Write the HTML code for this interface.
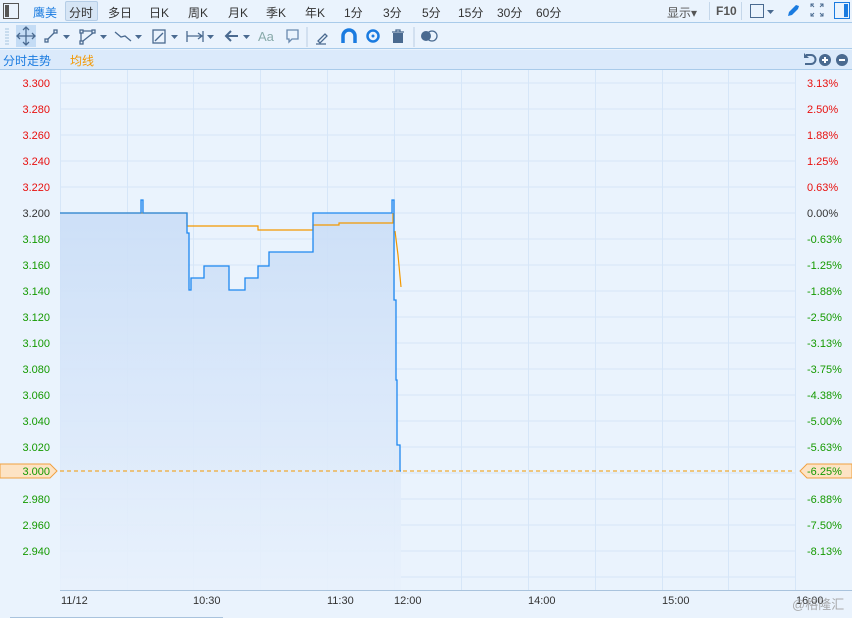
<!DOCTYPE html>
<html><head><meta charset="utf-8"><style>
*{margin:0;padding:0;box-sizing:border-box}
body{width:852px;height:618px;overflow:hidden;background:#eaf3fd;font-family:"Liberation Sans","Noto Sans CJK SC",sans-serif;position:relative}
.t{position:absolute;font-size:12px;color:#333;white-space:nowrap}
.l{position:absolute;font-size:11px;white-space:nowrap}
</style></head><body>
<!-- row1 -->
<div style="position:absolute;left:0;top:0;width:852px;height:23px;border-bottom:1px solid #a9cbea;background:#eaf3fd"></div>
<svg style="position:absolute;left:3px;top:3px" width="16" height="16"><rect x="0.5" y="0.5" width="15" height="15" fill="none" stroke="#555" /><rect x="2" y="2" width="4" height="12" fill="#555"/></svg>
<div class="t" style="left:33px;top:4px;color:#1a7be0">鹰美</div>
<div style="position:absolute;left:65px;top:1px;width:33px;height:20px;background:#d6e5f5;border:1px solid #b5cde6;border-radius:2px"></div>
<div class="t" style="left:69px;top:4px">分时</div>
<div class="t" style="left:108px;top:4px">多日</div>
<div class="t" style="left:149px;top:4px">日K</div>
<div class="t" style="left:188px;top:4px">周K</div>
<div class="t" style="left:228px;top:4px">月K</div>
<div class="t" style="left:266px;top:4px">季K</div>
<div class="t" style="left:305px;top:4px">年K</div>
<div class="t" style="left:344px;top:4px">1分</div>
<div class="t" style="left:383px;top:4px">3分</div>
<div class="t" style="left:422px;top:4px">5分</div>
<div class="t" style="left:458px;top:4px">15分</div>
<div class="t" style="left:497px;top:4px">30分</div>
<div class="t" style="left:536px;top:4px">60分</div>
<div class="t" style="left:667px;top:4px;color:#555">显示▾</div>
<div style="position:absolute;left:709px;top:2px;width:1px;height:18px;background:#c5d7ea"></div>
<div class="t" style="left:716px;top:4px;color:#555;font-weight:bold">F10</div>
<div style="position:absolute;left:741px;top:2px;width:1px;height:18px;background:#c5d7ea"></div>
<svg style="position:absolute;left:750px;top:4px" width="26" height="15"><rect x="0.5" y="0.5" width="13" height="13" fill="none" stroke="#4a6a90"/><path d="M17 6h7l-3.5 4z" fill="#4a6a90"/></svg>
<svg style="position:absolute;left:785px;top:3px" width="16" height="16"><path d="M3 13 L4 9 L11 2 L14 3 L13 6 L7 12 Z" fill="#1a7be0"/></svg>
<svg style="position:absolute;left:810px;top:3px" width="14" height="14" stroke="#4a6a90" fill="none"><path d="M1 4V1h3M10 1h3v3M13 10v3h-3M4 13H1v-3M1 1l3 3M13 1l-3 3M13 13l-3-3M1 13l3-3"/></svg>
<svg style="position:absolute;left:834px;top:2px" width="16" height="17"><rect x="0.5" y="0.5" width="15" height="16" fill="none" stroke="#1a7be0"/><rect x="10" y="2" width="4" height="13" fill="#1a7be0"/></svg>
<!-- row2 -->
<div style="position:absolute;left:0;top:24px;width:852px;height:25px;border-bottom:1px solid #a9cbea"></div>
<svg style="position:absolute;left:0;top:24px" width="450" height="25" fill="none" stroke="#4a6a90" stroke-width="1.3">
<path d="M5 5h4M5 8h4M5 11h4M5 14h4M5 17h4M5 20h4" stroke="#b5cde6"/>
<rect x="16" y="1" width="20" height="22" fill="#c4dcf5" stroke="none"/>
<path d="M26 4v16M18 12h16M23 6l3-3 3 3M23 18l3 3 3-3M20 9l-3 3 3 3M32 9l3 3-3 3" stroke="#4a6a90"/>
<rect x="45" y="15" width="3" height="3"/><rect x="54" y="6" width="3" height="3"/><path d="M48 15l6-6"/><path d="M63 11h7l-3.5 4z" fill="#4a6a90" stroke="none"/>
<rect x="80" y="6" width="3" height="3"/><rect x="92" y="6" width="3" height="3"/><rect x="80" y="17" width="3" height="3"/><path d="M81 9v8M83 7h9M83 17l10-8"/><path d="M100 11h7l-3.5 4z" fill="#4a6a90" stroke="none"/>
<path d="M115 8l6 5 4-1 6 5"/><path d="M135 11h7l-3.5 4z" fill="#4a6a90" stroke="none"/>
<rect x="153" y="6" width="12" height="13"/><path d="M155 17l8-8"/><path d="M171 11h7l-3.5 4z" fill="#4a6a90" stroke="none"/>
<path d="M187 7v11M203 7v11M187 12h15M198 9l4 3-4 3"/><path d="M207 11h7l-3.5 4z" fill="#4a6a90" stroke="none"/>
<path d="M226 12h12M231 7l-5 5 5 5" stroke-width="2"/><path d="M243 11h7l-3.5 4z" fill="#4a6a90" stroke="none"/>
<path d="M287 6h11v9h-6l-3 3v-3h-2z" stroke="#6a8ab0"/>
<path d="M307 3v20" stroke="#c5d7ea"/>
<path d="M318 17l7-7 2 2-7 7z M316 20h10" />
<path d="M343 19v-7a6 6 0 0 1 12 0v7" stroke="#1a7be0" stroke-width="3.5"/>
<circle cx="373" cy="12" r="5.5" stroke="#1a7be0" stroke-width="2.5"/><circle cx="373" cy="12" r="1.5" fill="#1a7be0" stroke="none"/>
<path d="M392 8h12M396 8v-2h4v2" /><rect x="393" y="9" width="10" height="10" fill="#4a6a90" stroke="none"/>
<path d="M414 3v20" stroke="#c5d7ea"/>
<circle cx="426" cy="12" r="5" fill="#4a6a90" stroke="none"/><circle cx="432" cy="12" r="5"/>
</svg>
<div class="t" style="left:258px;top:29px;color:#8aa;font-size:13px">Aa</div>
<!-- row3 -->
<div style="position:absolute;left:0;top:50px;width:852px;height:20px;background:#dbeafb;border-bottom:1px solid #a9cbea"></div>
<div class="t" style="left:3px;top:52px;color:#1a7be0">分时走势</div>
<div class="t" style="left:70px;top:52px;color:#f39800">均线</div>
<svg style="position:absolute;left:802px;top:52px" width="50" height="16"><path d="M4 3h5a4 4 0 0 1 0 9H3" fill="none" stroke="#4a6a90" stroke-width="2"/><path d="M2 1v5h5z" fill="#4a6a90"/><circle cx="23" cy="8" r="6" fill="#4a6a90"/><path d="M23 5v6M20 8h6" stroke="#fff" stroke-width="2"/><circle cx="40" cy="8" r="6" fill="#4a6a90"/><path d="M37 8h6" stroke="#fff" stroke-width="2"/></svg>
<!-- chart -->
<svg style="position:absolute;left:0;top:0" width="852" height="618">
<defs><linearGradient id="g" x1="0" y1="0" x2="0" y2="1"><stop offset="0" stop-color="#c9ddf7"/><stop offset="1" stop-color="#e8f1fc"/></linearGradient></defs>
<g stroke="#d6e6f8" stroke-width="1">
<path d="M60 83H795M60 109H795M60 135H795M60 161H795M60 187H795M60 213H795M60 239H795M60 265H795M60 291H795M60 317H795M60 343H795M60 369H795M60 395H795M60 421H795M60 447H795M60 473H795M60 499H795M60 525H795M60 551H795M60 577H795"/>
<path d="M60.5 70V590M127.5 70V590M193.5 70V590M260.5 70V590M327.5 70V590M394.5 70V590M461.5 70V590M528.5 70V590M595.5 70V590M662.5 70V590M728.5 70V590M795.5 70V590"/>
</g>
<path d="M60 213H141V200H143V213H187V233H189V290H191V278H204V266H229V290H245V278H258V266H269V252H313V213H392V200H394V300H396V380H397V445H400V471H401V590H60Z" fill="url(#g)" opacity="0.9"/>
<path d="M60 213H187V226H258V230H313V225H339V223H393V213 M395 231L398 255L401 287" fill="none" stroke="#f39800" stroke-width="1.2"/>
<path d="M60 213H141V200H143V213H187V233H189V290H191V278H204V266H229V290H245V278H258V266H269V252H313V213H392V200H394V300H396V380H397V445H400V471H401" fill="none" stroke="#1e88f0" stroke-width="1.3"/>
<path d="M60 471H795" stroke="#f39800" stroke-dasharray="4,3" stroke-width="1"/>
<path d="M60 590.5H852" stroke="#a9c3dd"/>
<path d="M10 617.5H223" stroke="#a9c3dd"/>
<path d="M0 464H50L57 471L50 478H0Z" fill="#fde3c4" stroke="#f0a040"/>
<path d="M852 464H807L800 471L807 478H852Z" fill="#fde3c4" stroke="#f0a040"/>
<g font-family="Liberation Sans" font-size="11" text-anchor="end">
<g fill="#e8100e"><text x="50" y="87">3.300</text><text x="50" y="113">3.280</text><text x="50" y="139">3.260</text><text x="50" y="165">3.240</text><text x="50" y="191">3.220</text></g>
<text x="50" y="217" fill="#333">3.200</text>
<g fill="#159a00"><text x="50" y="243">3.180</text><text x="50" y="269">3.160</text><text x="50" y="295">3.140</text><text x="50" y="321">3.120</text><text x="50" y="347">3.100</text><text x="50" y="373">3.080</text><text x="50" y="399">3.060</text><text x="50" y="425">3.040</text><text x="50" y="451">3.020</text><text x="50" y="475">3.000</text><text x="50" y="503">2.980</text><text x="50" y="529">2.960</text><text x="50" y="555">2.940</text></g>
</g>
<g font-family="Liberation Sans" font-size="11">
<g fill="#e8100e"><text x="807" y="87">3.13%</text><text x="807" y="113">2.50%</text><text x="807" y="139">1.88%</text><text x="807" y="165">1.25%</text><text x="807" y="191">0.63%</text></g>
<text x="807" y="217" fill="#333">0.00%</text>
<g fill="#159a00"><text x="807" y="243">-0.63%</text><text x="807" y="269">-1.25%</text><text x="807" y="295">-1.88%</text><text x="807" y="321">-2.50%</text><text x="807" y="347">-3.13%</text><text x="807" y="373">-3.75%</text><text x="807" y="399">-4.38%</text><text x="807" y="425">-5.00%</text><text x="807" y="451">-5.63%</text><text x="807" y="475">-6.25%</text><text x="807" y="503">-6.88%</text><text x="807" y="529">-7.50%</text><text x="807" y="555">-8.13%</text></g>
<g fill="#333"><text x="61" y="604">11/12</text><text x="193" y="604">10:30</text><text x="327" y="604">11:30</text><text x="394" y="604">12:00</text><text x="528" y="604">14:00</text><text x="662" y="604">15:00</text><text x="796" y="604">16:00</text></g>
</g>
<text x="792" y="609" font-family="Liberation Sans,Noto Sans CJK SC,sans-serif" font-size="13" fill="#999" opacity="0.8">@格隆汇</text>
</svg>
</body></html>
